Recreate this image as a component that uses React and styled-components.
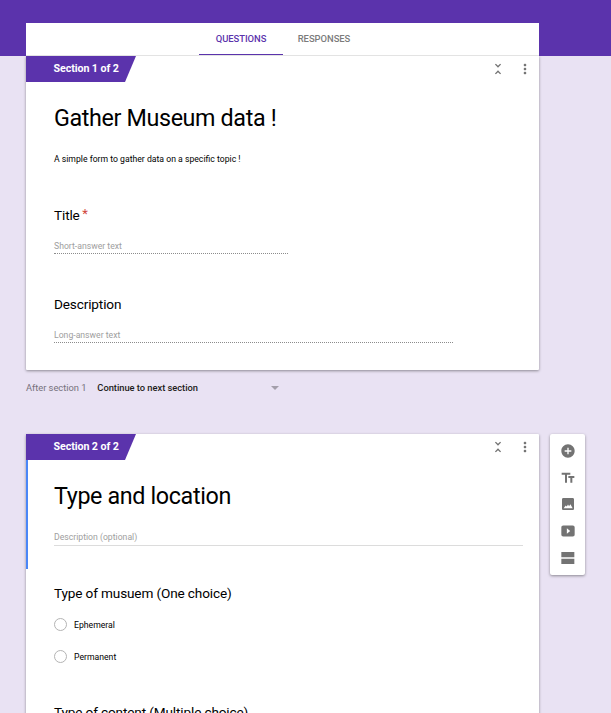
import React from 'react';
import styled, { createGlobalStyle } from 'styled-components';

const PURPLE = '#5b33ac';
const LAVENDER = '#e9e2f3';

const GlobalStyle = createGlobalStyle`
  body {
    margin: 0;
    background: ${LAVENDER};
    font-family: Roboto, sans-serif;
    color: #000;
  }
  * { box-sizing: border-box; }
`;

const Page = styled.div`
  height: 713px;
  overflow: hidden;
  padding: 23px 0 0 26px;
  background: linear-gradient(${PURPLE} 56px, ${LAVENDER} 56px);
`;

const Tabs = styled.nav`
  position: relative;
  z-index: 1;
  display: flex;
  justify-content: center;
  width: 513px;
  height: 33px;
  padding-right: 1px;
  background: #fff;
  border-bottom: 1px solid #e3e3e3;
`;

const Tab = styled.button`
  width: ${(p) => (p.$active ? 84 : 82)}px;
  height: 32px;
  padding: 0;
  border: 0;
  border-bottom: 1px solid ${(p) => (p.$active ? PURPLE : 'transparent')};
  background: none;
  font: 500 9.42px/31px Roboto, sans-serif;
  letter-spacing: -0.03px;
  color: ${(p) => (p.$active ? PURPLE : '#7b7b7b')};
`;

const Card = styled.section`
  width: 513px;
  height: ${(p) => p.$height}px;
  flex: none;
  background: #fff;
  border-radius: ${(p) => (p.$rounded ? '1px' : '0 0 1px 1px')};
  box-shadow: 0 1px 3px rgba(0, 0, 0, 0.4);
`;

const CardBar = styled.header`
  display: flex;
  align-items: flex-start;
  height: 26px;
`;

const Ribbon = styled.div`
  width: 110px;
  height: 26px;
  padding-left: 27.5px;
  background: ${PURPLE};
  clip-path: polygon(0 0, 100% 0, 99px 100%, 0 100%);
  color: #fff;
  font-size: 10.67px;
  font-weight: 700;
  letter-spacing: -0.07px;
  line-height: 25px;
`;

const CardActions = styled.div`
  display: flex;
  gap: 11px;
  margin: 5px 6px 0 auto;
  color: #737373;
`;

const Icon = styled.svg`
  display: block;
  width: 16px;
  height: 16px;
  fill: currentColor;
  fill-rule: evenodd;
`;

const Intro = styled.div`
  height: ${(p) => (p.$selected ? 109 : 83)}px;
  padding: 21px 16px 0 26px;
  border-left: 2px solid ${(p) => (p.$selected ? '#4a86f7' : 'transparent')};
`;

const Heading = styled.h1`
  margin: 0 0 19px;
  font-size: 23.3px;
  font-weight: 400;
  letter-spacing: -0.36px;
  line-height: 31px;
`;

const Summary = styled.p`
  margin: 0;
  font-size: 8.67px;
  line-height: 12px;
`;

const SummaryInput = styled.div`
  padding-bottom: 2px;
  border-bottom: 1px solid #dcdcdc;
  color: #9e9e9e;
  font-size: 8.67px;
  line-height: 12px;
`;

const Question = styled.div`
  padding: ${(p) => p.$gap}px 0 0 28px;
`;

const QuestionTitle = styled.h2`
  margin: 0 0 15px;
  font-size: 13.6px;
  font-weight: 400;
  letter-spacing: -0.14px;
  line-height: 19px;
`;

const Required = styled.span`
  display: inline-block;
  height: 19px;
  margin-left: 2.5px;
  vertical-align: top;
  color: #d0443a;
  font-size: 13px;
  line-height: 16px;
`;

const Answer = styled.div`
  width: ${(p) => p.$width}px;
  padding-bottom: 1px;
  border-bottom: 1px dotted #8c8c8c;
  color: #9e9e9e;
  font-size: 8.67px;
  line-height: 12px;
`;

const Options = styled.div`
  display: grid;
  gap: 19px;
`;

const Option = styled.label`
  display: flex;
  gap: 7px;
  height: 13px;
  font-size: 8.67px;
  line-height: 14px;
`;

const Radio = styled.span`
  width: 13px;
  height: 13px;
  border: 1.3px solid #b4b4b4;
  border-radius: 50%;
`;

const AfterSection = styled.div`
  display: flex;
  align-items: center;
  width: 253px;
  height: 13px;
  margin: 11px 0 40px;
  color: #76717c;
  font-size: 9.33px;
  letter-spacing: -0.03px;
  line-height: 13px;
`;

const NextSection = styled.span`
  margin-left: 11px;
  color: #1d1b20;
  font-weight: 500;
`;

const Caret = styled.span`
  margin-left: auto;
  border: 4px solid transparent;
  border-top-color: #a39eaa;
  border-bottom: 0;
`;

const SectionRow = styled.div`
  display: flex;
  align-items: flex-start;
  gap: 11px;
`;

const Toolbar = styled.aside`
  display: flex;
  flex-direction: column;
  align-items: center;
  gap: 10.7px;
  width: 35px;
  height: 141px;
  padding: 9px 0 0 1px;
  background: #fff;
  border-radius: 2px;
  box-shadow: 0 1px 3px rgba(0, 0, 0, 0.4);
  color: #737373;
`;

const paths = {
  collapse:
    'M7.41 18.59L8.83 20 12 16.83 15.17 20l1.41-1.41L12 14l-4.59 4.59zm9.18-13.18L15.17 4 12 7.17 8.83 4 7.41 5.41 12 10l4.59-4.59z',
  more: 'M12 8c1.1 0 2-.9 2-2s-.9-2-2-2-2 .9-2 2 .9 2 2 2zm0 2c-1.1 0-2 .9-2 2s.9 2 2 2 2-.9 2-2-.9-2-2-2zm0 6c-1.1 0-2 .9-2 2s.9 2 2 2 2-.9 2-2-.9-2-2-2z',
  add: 'M12 2C6.48 2 2 6.48 2 12s4.48 10 10 10 10-4.48 10-10S17.52 2 12 2zm5 11h-4v4h-2v-4H7v-2h4V7h2v4h4v2z',
  text: 'M2.5 4v3h5v12h3V7h5V4h-13zm19 5h-9v3h3v7h3v-7h3V9z',
  image:
    'M21 19V5c0-1.1-.9-2-2-2H5c-1.1 0-2 .9-2 2v14c0 1.1.9 2 2 2h14c1.1 0 2-.9 2-2zM5.5 18.2l3-4 1.7 1.6 1.8-3 1.6 2.4 2-2.8 3.4 5.8z',
  video:
    'M5 3.7h14c2 0 3 1 3 3v10.6c0 2-1 3-3 3H5c-2 0-3-1-3-3V6.7c0-2 1-3 3-3zm5.3 4.2v8.2l5-4.1z',
  section: 'M2 3h19.5v7.8H2zM2 13.3h19.5V21H2z',
};

const Glyph = ({ name }) => (
  <Icon viewBox="0 0 24 24" aria-hidden="true">
    <path d={paths[name]} />
  </Icon>
);

const SectionBar = ({ children }) => (
  <CardBar>
    <Ribbon>{children}</Ribbon>
    <CardActions>
      <Glyph name="collapse" />
      <Glyph name="more" />
    </CardActions>
  </CardBar>
);

export default function App() {
  return (
    <Page>
      <GlobalStyle />
      <Tabs>
        <Tab $active>QUESTIONS</Tab>
        <Tab>RESPONSES</Tab>
      </Tabs>
      <Card $height={314}>
        <SectionBar>Section 1 of 2</SectionBar>
        <Intro>
          <Heading>Gather Museum data !</Heading>
          <Summary>A simple form to gather data on a specific topic !</Summary>
        </Intro>
        <Question $gap={41}>
          <QuestionTitle>
            Title<Required>*</Required>
          </QuestionTitle>
          <Answer $width={234}>Short-answer text</Answer>
        </Question>
        <Question $gap={41}>
          <QuestionTitle>Description</QuestionTitle>
          <Answer $width={399}>Long-answer text</Answer>
        </Question>
      </Card>
      <AfterSection>
        After section 1<NextSection>Continue to next section</NextSection>
        <Caret />
      </AfterSection>
      <SectionRow>
        <Card $height={320} $rounded>
          <SectionBar>Section 2 of 2</SectionBar>
          <Intro $selected>
            <Heading>Type and location</Heading>
            <SummaryInput>Description (optional)</SummaryInput>
          </Intro>
          <Question $gap={15}>
            <QuestionTitle>Type of musuem (One choice)</QuestionTitle>
            <Options>
              <Option>
                <Radio />
                Ephemeral
              </Option>
              <Option>
                <Radio />
                Permanent
              </Option>
            </Options>
          </Question>
          <Question $gap={40}>
            <QuestionTitle>Type of content (Multiple choice)</QuestionTitle>
          </Question>
        </Card>
        <Toolbar>
          <Glyph name="add" />
          <Glyph name="text" />
          <Glyph name="image" />
          <Glyph name="video" />
          <Glyph name="section" />
        </Toolbar>
      </SectionRow>
    </Page>
  );
}
